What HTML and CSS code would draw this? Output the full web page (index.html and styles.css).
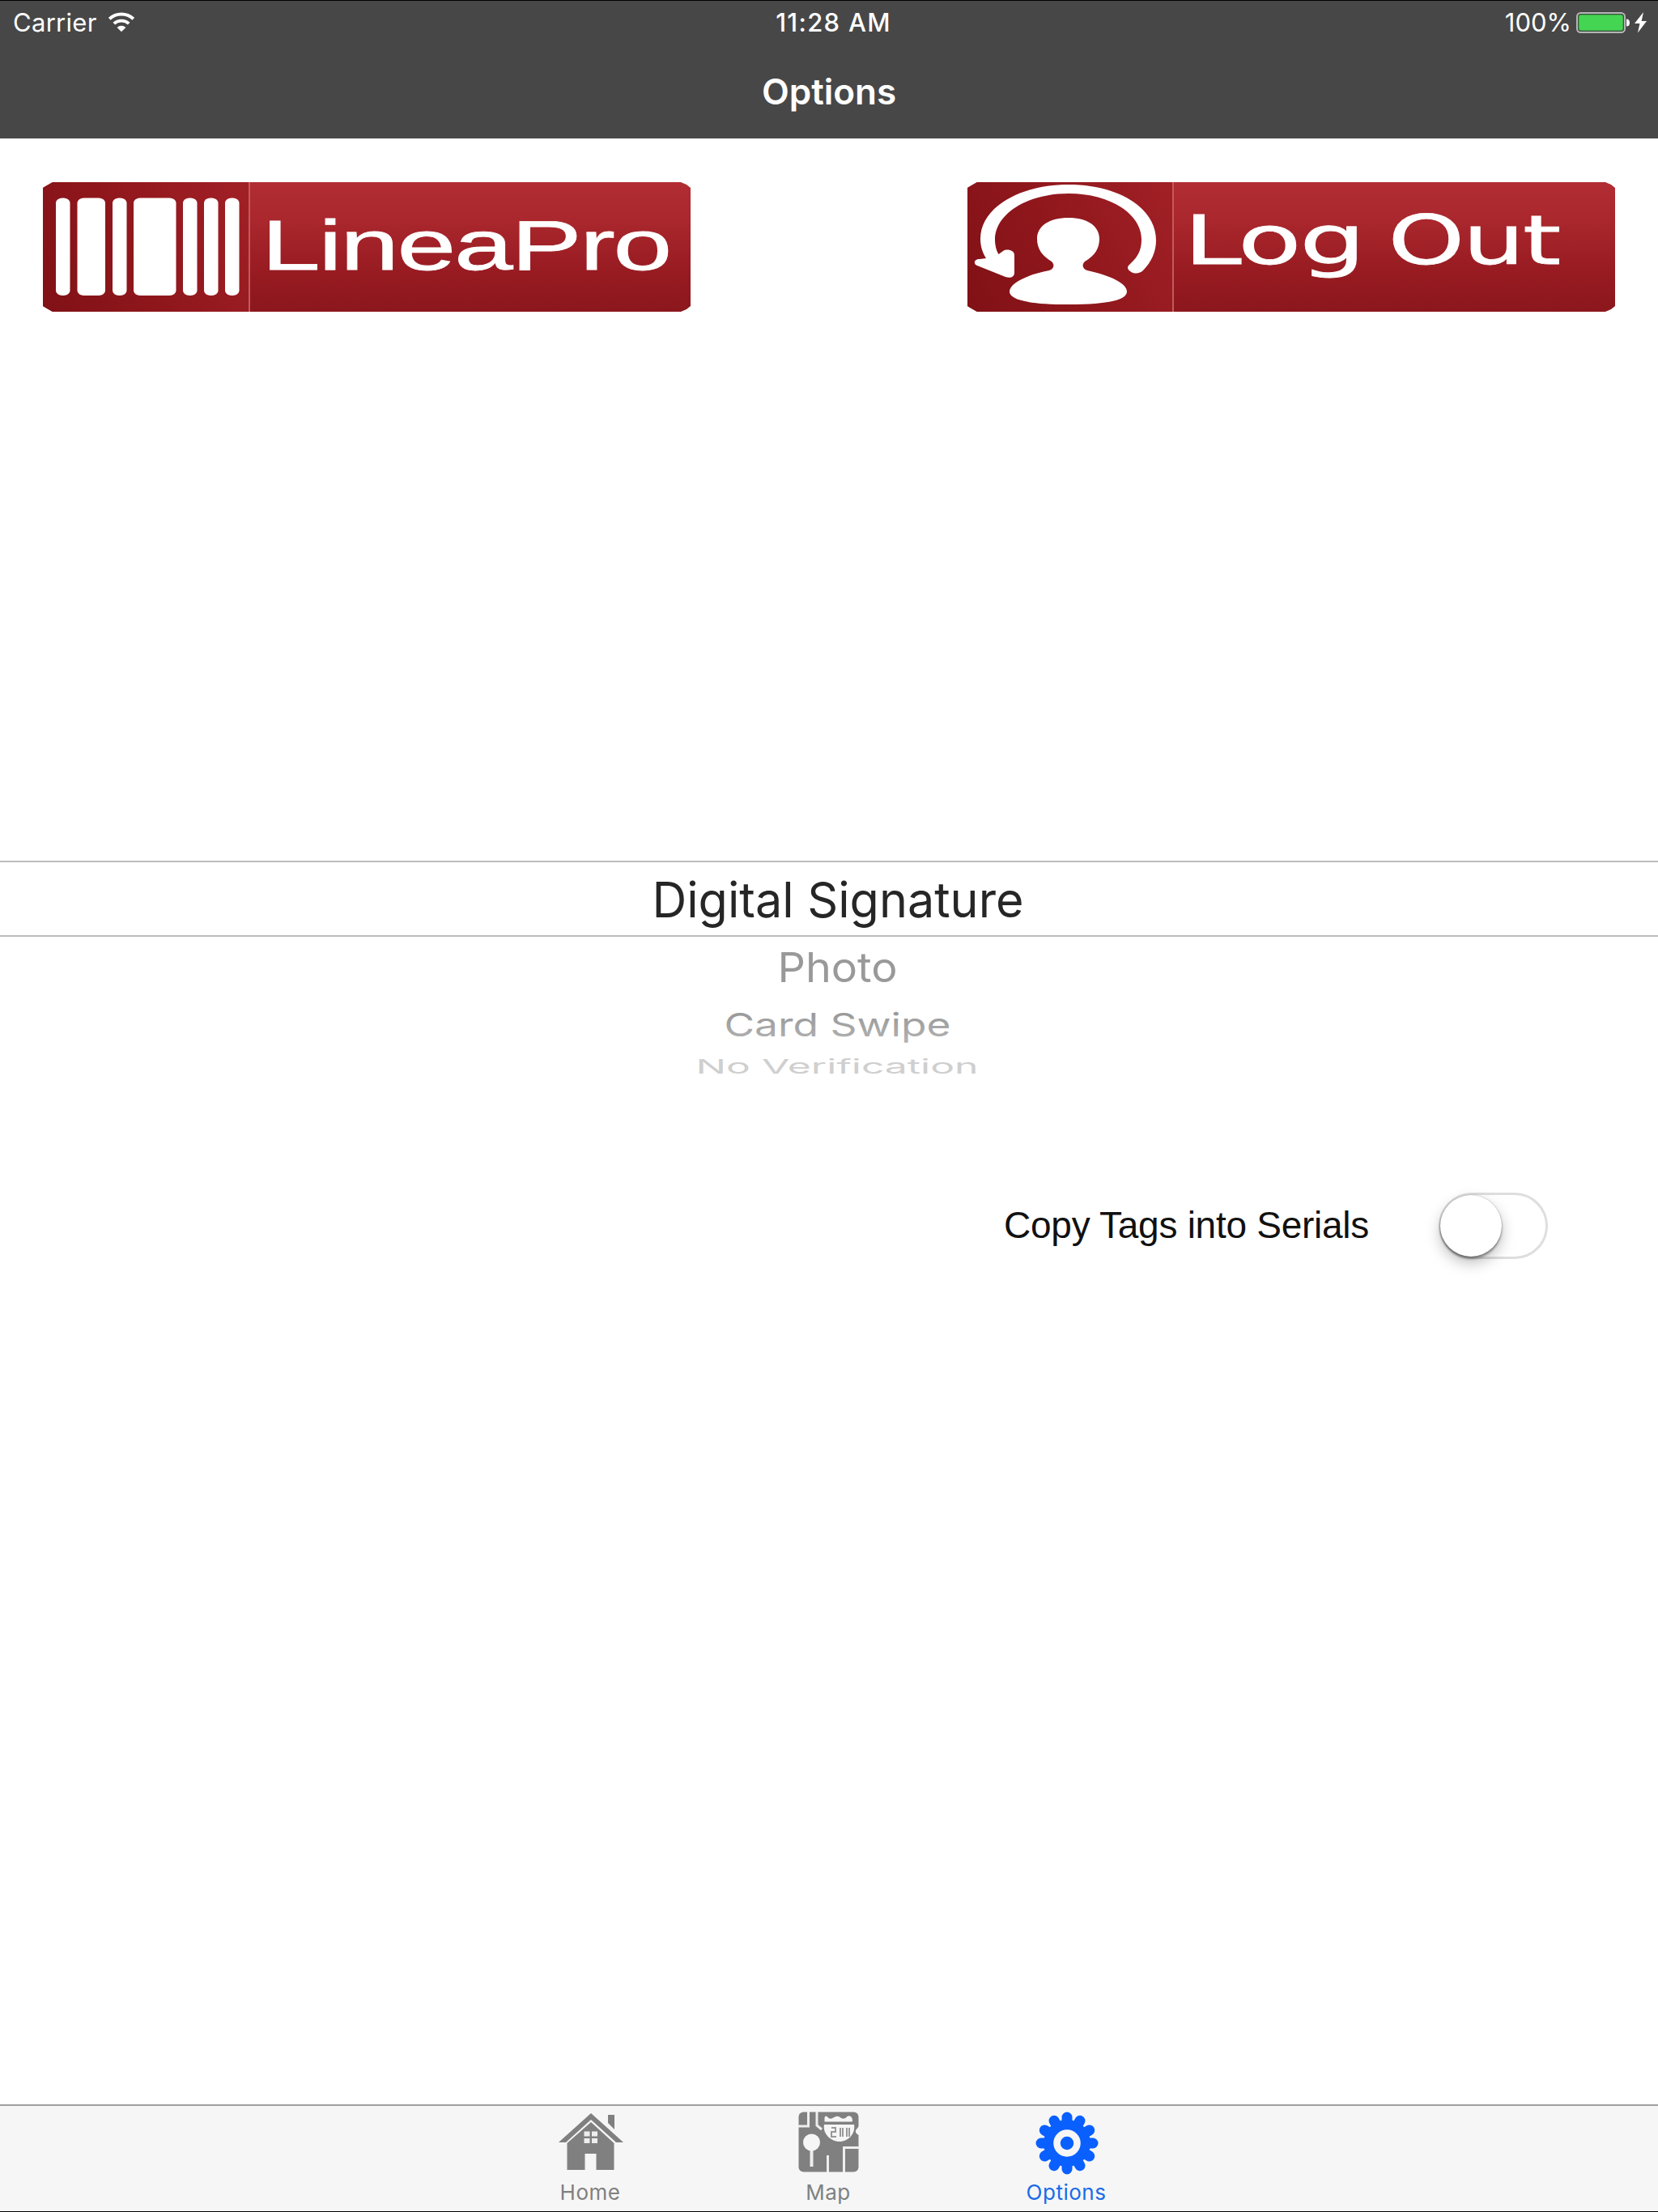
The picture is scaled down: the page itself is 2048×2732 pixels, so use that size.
FILE: index.html
```html
<!DOCTYPE html>
<html lang="en">
<head>
<meta charset="utf-8">
<title>Options</title>
<link rel="stylesheet" href="styles.css">
</head>
<body>
<header class="header">
  <div class="status">
    <div class="status-left">
      <span class="carrier">Carrier</span>
      <svg class="wifi" width="32" height="25" viewBox="0 0 32 25" fill="none" stroke="#fff">
        <path d="M1.2 8.3a21.5 21.5 0 0 1 29.6 0" stroke-width="4"/>
        <path d="M6.8 14.2a13.5 13.5 0 0 1 18.4 0" stroke-width="3.8"/>
        <path d="M16 24.3l-5.4-5.4a8 8 0 0 1 10.8 0z" fill="#fff" stroke="none"/>
      </svg>
    </div>
    <span class="clock">11:28 AM</span>
    <div class="status-right">
      <span class="percent">100%</span>
      <svg class="battery" width="66" height="26" viewBox="0 0 66 26">
        <rect x="1" y="1" width="59" height="24" rx="4.5" fill="none" stroke="#b5b5b5" stroke-width="2"/>
        <rect x="2.9" y="2.9" width="55.2" height="20.2" rx="3" fill="#44d552" stroke="#2f5a34" stroke-width=".8"/>
        <path d="M62 8.5q4 0 4 4.5t-4 4.5z" fill="#fff"/>
      </svg>
      <svg class="bolt" width="16" height="26" viewBox="0 0 16 26"><path d="M11 0L0 14h6.5L4 25.500 15 11H8.700z" fill="#fff"/></svg>
    </div>
  </div>
  <h1 class="title">Options</h1>
</header>

<main class="main">
  <div class="actions">
    <button class="action">
      <svg class="action-icon" width="254" height="160" viewBox="0 0 254 160" fill="#fff">
        <rect x="16" y="19.500" width="17.500" height="120.500" rx="8" ry="6"/>
        <rect x="42.500" y="19.500" width="34.500" height="120.500" rx="8" ry="6"/>
        <rect x="86" y="19.500" width="17.500" height="120.500" rx="8" ry="6"/>
        <rect x="112" y="19.500" width="52.500" height="120.500" rx="8" ry="6"/>
        <rect x="173" y="19.500" width="17.500" height="120.500" rx="8" ry="6"/>
        <rect x="199" y="19.500" width="17.500" height="120.500" rx="8" ry="6"/>
        <rect x="225" y="19.500" width="17.500" height="120.500" rx="8" ry="6"/>
      </svg>
      <svg class="action-label" width="544" height="160" viewBox="0 0 544 160">
        <text class="label-linea" x="14" y="107.700" textLength="505" lengthAdjust="spacingAndGlyphs">LineaPro</text>
      </svg>
    </button>
    <button class="action">
      <svg class="action-icon" width="253" height="160" viewBox="0 0 253 160" fill="#fff">
        <path d="M23 94C18 86 16 78 16 70C16 32 63 3 125 3S233 32 233 72C233 86 227 99 217 109C213 113 206 114 201 110C197 107 197 104 201 101C211 92 215 83 215 71C215 39 176 14 125 14S34 39 34 71C34 78 36 85 38.500 89L44 85C49 82 58 84 58 90V112C58 117 53 119 47 117L12 103C7 101 8 95 15 95Z"/>
        <path d="M125 44C148 44 163 54 163 70C163 82 157 91 145 98C141 102 142 107 148 109C176 115 197 125 197 135C197 145 176 151 125 151S52 145 52 135C52 125 74 114 101 109C107 107 108 102 104 98C92 91 86 82 86 70C86 54 101 44 125 44Z"/>
      </svg>
      <svg class="action-label" width="545" height="160" viewBox="0 0 545 160">
        <text class="label-logout" y="101"><tspan x="12" textLength="223" lengthAdjust="spacingAndGlyphs">Log</tspan> <tspan x="265" textLength="212" lengthAdjust="spacingAndGlyphs">Out</tspan></text>
      </svg>
    </button>
  </div>

  <svg class="picker" width="2048" height="290" viewBox="0 0 2048 290">
    <defs>
      <linearGradient id="fade2" x1="0" y1="0" x2="0" y2="1"><stop offset=".2" stop-color="#999"/><stop offset="1" stop-color="#b4b4b4"/></linearGradient>
    </defs>
    <rect y="0" width="2048" height="2" fill="#bcbcbc"/>
    <rect y="92" width="2048" height="2" fill="#bcbcbc"/>
    <text class="pick pick-0" x="805.500" y="69.500" textLength="459" lengthAdjust="spacingAndGlyphs">Digital Signature</text>
    <text class="pick pick-1" x="960.500" y="149.500" textLength="148" lengthAdjust="spacingAndGlyphs">Photo</text>
    <text class="pick pick-2" x="894.500" y="217" textLength="280" lengthAdjust="spacingAndGlyphs" fill="url(#fade2)">Card Swipe</text>
    <g transform="translate(0 263) scale(1 .4)">
      <text class="pick pick-3" x="859.500" y="0" textLength="349" lengthAdjust="spacingAndGlyphs">No Verification</text>
    </g>
  </svg>

  <div class="setting">
    <span class="setting-label">Copy Tags into Serials</span>
    <span class="switch" role="switch" aria-checked="false"><span class="knob"></span></span>
  </div>
</main>

<nav class="tabs">
  <div class="tab">
    <svg class="tab-icon" width="80" height="80" viewBox="0 0 80 80" fill="#808080">
      <path d="M61 5h8v18l-8-8z"/>
      <path d="M40 3L0 39h9L40 11l31 28h9z"/>
      <path d="M40 14L10.500 40v33h22V53h14v20h22V40z"/>
      <path d="M31.500 25.500h7v6h-7zM41 25.500h7v6h-7zM31.500 34h7v6h-7zM41 34h7v6h-7z" fill="#eee"/>
    </svg>
    <span class="tab-label">Home</span>
  </div>
  <div class="tab">
    <svg class="tab-icon" width="80" height="80" viewBox="0 0 80 80">
      <rect x="2.500" y="1.500" width="74" height="74" rx="6" fill="#808080"/>
      <g fill="none" stroke="#eee" stroke-width="3">
        <path d="M2 19h12.500V1M25 1v17l6 5M38.500 76V55M58.500 76V45.500H77"/>
        <path d="M18.500 48v21" stroke-width="4"/>
      </g>
      <circle cx="18.500" cy="39" r="10.500" fill="#f6f6f6"/>
      <path d="M34.500 13.500V8q2-3 4 0 2 3 6 1 6-4 9-1 5 4 9-1 4-2 6 2 1 3 0 4.500zM34 17h37c2 11-7 21-18 21S32 28 34 17z" fill="#f6f6f6"/>
      <path d="M43 21h5v5h-5v6h6M54 21v11M57 21v11M62 21v11M65 21v11" fill="none" stroke="#999" stroke-width="2"/>
      <path d="M77 19l-4 5q-1 4 4 6z" fill="#f6f6f6"/>
    </svg>
    <span class="tab-label">Map</span>
  </div>
  <div class="tab tab-active">
    <svg class="tab-icon" width="80" height="80" viewBox="-40 -40 80 80">
      <g stroke="#0a60ff" stroke-width="13" stroke-linecap="round">
        <path d="M0-32V32M-32 0H32"/>
        <path d="M0-32V32M-32 0H32" transform="rotate(30)"/>
        <path d="M0-32V32M-32 0H32" transform="rotate(60)"/>
      </g>
      <circle r="29" fill="#0a60ff"/>
      <circle r="12.500" fill="none" stroke="#f6f6f6" stroke-width="8.500"/>
    </svg>
    <span class="tab-label">Options</span>
  </div>
</nav>
</body>
</html>
```
FILE: styles.css
```css
* { box-sizing: border-box; }

body {
  margin: 0;
  height: 2732px;
  display: flex;
  flex-direction: column;
  background: #fff;
  font-family: Inter, "Liberation Sans", sans-serif;
}

.header {
  height: 171px;
  border-top: 1px solid #000;
  background: #474747;
  color: #fff;
}

.status {
  height: 56px;
  padding: 0 13px 0 16px;
  display: grid;
  grid-template-columns: 1fr auto 1fr;
  font-size: 31px;
  line-height: 54px;
}

.status-left,
.status-right {
  display: flex;
}

.carrier { letter-spacing: .3px; }
.wifi { margin: 14px 0 0 14px; }

.clock {
  padding-left: 8px;
  font-weight: 550;
  letter-spacing: 1.3px;
}

.status-right { justify-content: flex-end; }
.battery { margin: 14px 0 0 6px; }
.bolt { margin: 14px 0 0 6px; }

.title {
  margin: 0;
  text-align: center;
  font-size: 44px;
  font-weight: 580;
  line-height: 112px;
}

.main {
  flex: 1;
}

.actions {
  display: flex;
  justify-content: space-between;
  padding: 54px 53px 0;
}

.action {
  display: flex;
  width: 800px;
  height: 160px;
  padding: 0;
  border: 0;
  background: linear-gradient(#b12d33, #a9272d 30%, #971b21 70%, #8b171d);
  clip-path: polygon(0 7px, 5px 4px, 12px 0, 788px 0, 795px 3px, 800px 7px, 800px 153px, 795px 157px, 788px 160px, 12px 160px, 5px 156px, 0 153px);
}

.action-icon {
  background: linear-gradient(60deg, #801116, #8f171c 45%, #a12026);
}

.action-label {
  border-left: 2px solid #c4595d;
  width: 546px;
  fill: #fff;
  stroke: #fff;
}

.label-linea {
  font: 87px "Liberation Sans", sans-serif;
  letter-spacing: -1.5px;
  stroke-width: .8px;
}

.label-logout {
  font: 83px "DejaVu Sans", sans-serif;
  letter-spacing: -1.5px;
  stroke-width: .8px;
}

.picker {
  display: block;
  margin-top: 678px;
}

.pick { font-family: Inter, sans-serif; }
.pick-0 { font-size: 60.5px; fill: #262626; }
.pick-1 { font-size: 51px; fill: #999; }
.pick-2 { font-size: 40px; }
.pick-3 { font-size: 62px; fill: #cfcfcf; }

.setting {
  display: flex;
  justify-content: flex-end;
  align-items: center;
  height: 82px;
  margin-top: 120px;
  padding-right: 136px;
}

.setting-label {
  margin-right: 86px;
  font: 46px "Liberation Sans", sans-serif;
  letter-spacing: -.27px;
  line-height: 54px;
  padding-bottom: 2px;
  color: #111;
}

.switch {
  width: 135px;
  height: 82px;
  padding: 0;
  border: 3px solid #dedede;
  border-radius: 41px;
}

.knob {
  display: block;
  width: 76px;
  height: 76px;
  margin-left: -1px;
  border-radius: 50%;
  background: #fff;
  box-shadow: 0 3px 3px rgba(0, 0, 0, .35), 0 8px 18px rgba(0, 0, 0, .25), 0 0 2px rgba(0, 0, 0, .3);
}

.tabs {
  display: flex;
  justify-content: center;
  gap: 134px;
  height: 133px;
  border-top: 2px solid #a0a0a0;
  border-bottom: 1px solid #000;
  background: #f6f6f6;
  color: #808080;
}

.tab {
  width: 160px;
  display: flex;
  flex-direction: column;
  align-items: center;
}

.tab-icon { margin-top: 6px; }

.tab-label {
  font-size: 26px;
  line-height: 32px;
  margin: 5px 2px 0 0;
  letter-spacing: .5px;
}

.tab-active { color: #1a6be8; }
```
